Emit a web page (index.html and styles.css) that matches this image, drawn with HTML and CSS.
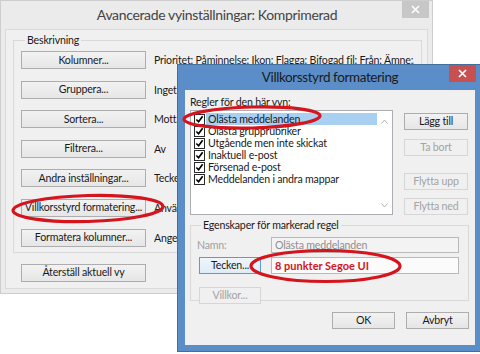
FILE: index.html
```html
<!DOCTYPE html>
<html lang="sv">
<head>
<meta charset="utf-8">
<title>Villkorsstyrd formatering</title>
<link rel="stylesheet" href="styles.css">
</head>
<body>
<section class="win back">
  <header class="tb">
    <span></span>
    <span class="ttl">Avancerade vyinställningar: Komprimerad</span>
    <span class="close inactive"><svg width="9" height="9" viewBox="0 0 9 9"><path d="M1 1L8 8M8 1L1 8" stroke="#fff" stroke-width="1.6"/></svg></span>
  </header>
  <div class="client">
    <fieldset class="grp">
      <legend>Beskrivning</legend>
      <div class="rows">
        <button class="btn">Kolumner...</button><span class="val">Prioritet: Påminnelse: Ikon: Flagga: Bifogad fil: Från: Ämne:...</span>
        <button class="btn">Gruppera...</button><span class="val">Inget</span>
        <button class="btn">Sortera...</button><span class="val">Mottaget (fallande)</span>
        <button class="btn">Filtrera...</button><span class="val">Av</span>
        <button class="btn">Andra inställningar...</button><span class="val">Teckensnitt och andra tabellvyinställningar</span>
        <button class="btn">Villkorsstyrd formatering...</button><span class="val">Använd användardefinierade teckensnitt</span>
        <button class="btn">Formatera kolumner...</button><span class="val">Ange visningsformat för varje fält</span>
      </div>
    </fieldset>
    <button class="btn reset">Återställ aktuell vy</button>
  </div>
</section>

<section class="win front">
  <header class="tb">
    <span></span>
    <span class="ttl">Villkorsstyrd formatering</span>
    <span class="close active"><svg width="9" height="9" viewBox="0 0 9 9"><path d="M1 1L8 8M8 1L1 8" stroke="#fff" stroke-width="1.6"/></svg></span>
  </header>
  <div class="client">
    <div class="lbl">Regler för den här vyn:</div>
    <div class="listrow">
      <div class="list">
        <ul class="items">
          <li class="sel"><span class="cb"><svg width="10" height="10" viewBox="0 0 10 10"><path d="M1.5 5L4 7.5L8.5 1.5" fill="none" stroke="#000" stroke-width="1.9"/></svg></span><span class="it">Olästa meddelanden</span></li>
          <li><span class="cb"><svg width="10" height="10" viewBox="0 0 10 10"><path d="M1.5 5L4 7.5L8.5 1.5" fill="none" stroke="#000" stroke-width="1.9"/></svg></span><span class="it">Olästa grupprubriker</span></li>
          <li><span class="cb"><svg width="10" height="10" viewBox="0 0 10 10"><path d="M1.5 5L4 7.5L8.5 1.5" fill="none" stroke="#000" stroke-width="1.9"/></svg></span><span class="it">Utgående men inte skickat</span></li>
          <li><span class="cb"><svg width="10" height="10" viewBox="0 0 10 10"><path d="M1.5 5L4 7.5L8.5 1.5" fill="none" stroke="#000" stroke-width="1.9"/></svg></span><span class="it">Inaktuell e-post</span></li>
          <li><span class="cb"><svg width="10" height="10" viewBox="0 0 10 10"><path d="M1.5 5L4 7.5L8.5 1.5" fill="none" stroke="#000" stroke-width="1.9"/></svg></span><span class="it">Försenad e-post</span></li>
          <li><span class="cb"><svg width="10" height="10" viewBox="0 0 10 10"><path d="M1.5 5L4 7.5L8.5 1.5" fill="none" stroke="#000" stroke-width="1.9"/></svg></span><span class="it">Meddelanden i andra mappar</span></li>
        </ul>
        <div class="sb">
          <svg width="7" height="5" viewBox="0 0 7 5"><path d="M0.5 4.5L3.5 1L6.5 4.5" fill="none" stroke="#b0b0b0" stroke-width="1"/></svg>
          <svg width="7" height="5" viewBox="0 0 7 5"><path d="M0.5 0.5L3.5 4L6.5 0.5" fill="none" stroke="#b0b0b0" stroke-width="1"/></svg>
        </div>
      </div>
      <div class="side">
        <button class="btn">Lägg till</button>
        <button class="btn dis">Ta bort</button>
        <span class="grow"></span>
        <button class="btn dis">Flytta upp</button>
        <button class="btn dis">Flytta ned</button>
      </div>
    </div>
    <fieldset class="grp props">
      <legend>Egenskaper för markerad regel</legend>
      <div class="pgrid">
        <span class="dislbl">Namn:</span>
        <span class="tbox disbox">Olästa meddelanden</span>
        <button class="btn focus">Tecken...</button>
        <span class="tbox font">8 punkter Segoe UI</span>
        <button class="btn dis">Villkor...</button>
      </div>
    </fieldset>
    <div class="foot">
      <button class="btn">OK</button>
      <button class="btn">Avbryt</button>
    </div>
  </div>
</section>

<svg class="marks" width="480" height="354" viewBox="0 0 480 354">
  <ellipse cx="252" cy="117.5" rx="68" ry="10.5" transform="rotate(-1.5 252 117.5)" fill="none" stroke="#d4151d" stroke-width="3.2"/>
  <ellipse cx="88" cy="208.5" rx="75" ry="13" transform="rotate(-1.5 88 208.5)" fill="none" stroke="#d4151d" stroke-width="3.2"/>
  <ellipse cx="325.5" cy="266" rx="74.5" ry="15.5" fill="none" stroke="#d4151d" stroke-width="3.2"/>
</svg>
</body>
</html>
```
FILE: styles.css
```css
* { box-sizing: border-box; margin: 0; padding: 0; }
html, body { width: 480px; height: 354px; overflow: hidden; background: #fff; }
body {
  position: relative;
  font-family: Lato, "Noto Sans", sans-serif;
  font-size: 10.6px;
  letter-spacing: -0.18px;
  color: #1a1a1a;
}

.win { position: absolute; display: flex; flex-direction: column; }

.tb {
  display: grid;
  grid-template-columns: 1fr auto 1fr;
  align-items: start;
}
.ttl { white-space: nowrap; }
.close {
  justify-self: end;
  width: 27px;
  height: 17px;
  display: flex;
  align-items: center;
  justify-content: center;
}
.close.inactive { background: #c7c7c7; }
.close.active { background: #c75050; }

/* back window */
.back {
  left: 0; top: 0; width: 433px; height: 294px;
  background: #ebebeb;
  border: 1px solid #cdcdcd;
  padding: 0 4px 4px 4px;
}
.back .tb { height: 28px; margin-right: -1px; }
.back .ttl { font-size: 14px; letter-spacing: -0.35px; line-height: 28px; color: #444; }
.back .client {
  flex: 1;
  background: #f0f0f0;
  border: 1px solid #dadada;
  padding: 3px 5px 0 7px;
  display: flex;
  flex-direction: column;
  align-items: flex-start;
}

.grp {
  border: 1px solid #d9d9d9;
  align-self: stretch;
}
.grp legend {
  margin-left: 4px;
  padding: 0 2px;
  line-height: 14px;
}
.back .grp { padding: 4px 7px 5px 7px; }

.rows {
  display: grid;
  grid-template-columns: 125px 1fr;
  column-gap: 8px;
  row-gap: 11.6px;
  align-items: center;
}
.val { white-space: nowrap; overflow: hidden; }

.btn {
  font: inherit;
  letter-spacing: inherit;
  color: #1a1a1a;
  height: 18px;
  line-height: 15px;
  background: linear-gradient(#f2f2f2, #e6e6e6);
  border: 1px solid #adadad;
  white-space: nowrap;
}
.back .btn { width: 125px; }
.btn.reset { margin: 11px 0 0 8px; }
.btn.dis { color: #a3a3a3; border-color: #d6d6d6; background: #f0f0f0; }
.btn.focus { border-color: #5a9ad6; background: linear-gradient(#eef5fc, #dfecf8); }

/* front dialog */
.front {
  left: 177px; top: 64px; width: 305px; height: 288px;
  background: #5b8ec9;
  border: 1px solid #41709f;
  padding: 0 6px 6px 7px;
}
.front .tb { height: 25px; }
.front .ttl { font-size: 13.5px; letter-spacing: -0.4px; line-height: 25px; color: #1a1a1a; }
.front .close { margin-right: -1px; }
.front .client {
  flex: 1;
  background: #f0f0f0;
  padding: 6px 6px 6px 5px;
  display: flex;
  flex-direction: column;
}
.lbl { line-height: 13px; margin-bottom: 1px; }

.listrow { display: flex; gap: 11px; }
.list {
  width: 203px;
  height: 105px;
  background: #fff;
  border: 1px solid #abadb3;
  display: flex;
}
.items { list-style: none; flex: 1; padding: 2px 0 0 3px; }
.items li { height: 12px; display: flex; align-items: center; }
.cb {
  width: 11px; height: 11px;
  border: 1px solid #2a2a2a;
  background: #fff;
  display: flex;
  align-items: center;
  justify-content: center;
  margin-right: 1px;
}
.cb svg { width: 9px; height: 9px; }
.it { flex: 1; line-height: 12px; padding-left: 2px; white-space: nowrap; }
.sel .it { background: #a9cff1; }
.sb {
  width: 15px;
  display: flex;
  flex-direction: column;
  justify-content: space-between;
  align-items: center;
  padding: 8px 0 6px;
}

.side { width: 64px; display: flex; flex-direction: column; padding-top: 3px; }
.side .btn { height: 17px; }
.side .btn + .btn { margin-top: 9px; }
.side .grow { flex: 1; }
.side .btn:last-child { margin-top: 8px; }

.props { margin-top: 3px; padding: 5px 9px 5px 6px; }
.pgrid {
  display: grid;
  grid-template-columns: 74px 1fr;
  grid-template-rows: 16px 17px 17px;
  row-gap: 4px;
  align-items: center;
}
.pgrid .btn { width: 62px; height: 17px; margin-left: 2px; }
.pgrid > :last-child { grid-column: 1; }
.dislbl { color: #a0a0a0; }
.tbox {
  display: flex;
  align-items: center;
  height: 100%;
  padding-left: 3px;
  border: 1px solid #b9b9b9;
  white-space: nowrap;
}
.disbox { color: #8f8f8f; background: #f3f3f3; }
.font { background: #fbfbfb; color: #d4151d; font-weight: bold; font-size: 11px; letter-spacing: 0; }
.pgrid .btn.dis { align-self: start; margin-top: 9px; }

.foot { margin-top: 11px; display: flex; justify-content: flex-end; gap: 11px; }
.foot .btn { width: 63px; height: 17px; }

.marks { position: absolute; left: 0; top: 0; pointer-events: none; }
```
